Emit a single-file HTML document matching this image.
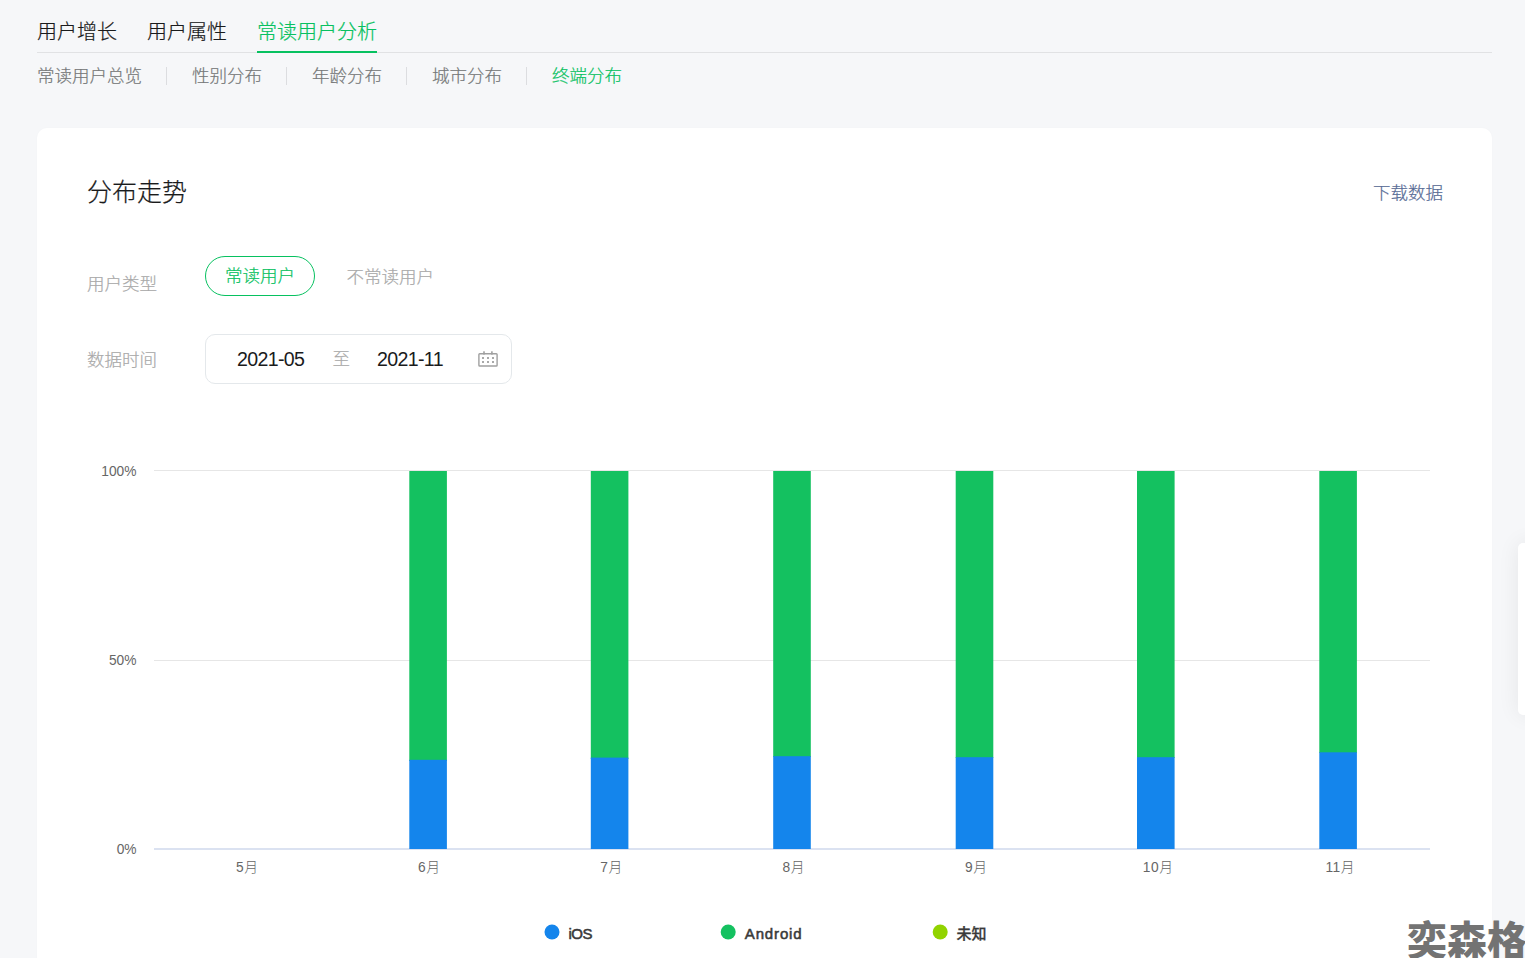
<!DOCTYPE html>
<html lang="zh-CN">
<head>
<meta charset="utf-8">
<title>常读用户分析 - 终端分布</title>
<style>
*{margin:0;padding:0;box-sizing:border-box}
html,body{width:1525px;height:958px;overflow:hidden;background:#f6f7f9}
body{position:relative;font-family:"Liberation Sans","Noto Sans CJK SC",sans-serif;color:#1a1b1c;font-weight:300;-webkit-text-stroke:0.22px}
.abs{position:absolute;white-space:nowrap}
.t1{font-size:20px;line-height:30px;top:17px;color:#1a1b1c}
.t1.on{color:#07c160}
.hr{position:absolute;left:37px;top:52px;width:1455px;height:1px;background:#e1e2e4}
.ul{position:absolute;left:257px;top:51px;width:120px;height:2px;background:#07c160}
.t2{font-size:17.5px;line-height:26px;top:63px;color:#757778}
.t2.on{color:#07c160}
.sep{position:absolute;top:67px;width:1px;height:18px;background:#dcdde0}
.card{position:absolute;left:37px;top:128px;width:1455px;height:900px;background:#fff;border-radius:10px;box-shadow:0 0 6px rgba(0,0,0,0.012)}
.title{font-size:25px;line-height:36px;left:87px;top:173.5px;color:#1a1b1c}
.dl{font-size:17.5px;line-height:26px;left:1373px;top:180px;color:#576b95}
.lab{font-size:17.5px;line-height:26px;left:87px;color:#a9a9a9}
.pill{position:absolute;left:205px;top:256px;width:110px;height:40px;border:1px solid #07c160;border-radius:20px;color:#07c160;font-size:17.5px;line-height:39px;text-align:center}
.opt{font-size:17.5px;line-height:26px;left:346.5px;top:263.5px;color:#a9a9a9}
.date{position:absolute;left:205px;top:334px;width:307px;height:50px;border:1px solid #e4e8eb;border-radius:10px;background:#fff}
.dt{font-size:19.6px;line-height:26px;top:345.5px;color:#1a1b1c;letter-spacing:-0.65px;font-weight:400;-webkit-text-stroke:0}
.to{font-size:17.5px;line-height:26px;left:332.5px;top:346px;color:#a9a9a9}
.float{position:absolute;left:1518px;top:543px;width:40px;height:172px;background:#fff;border-radius:5px;box-shadow:0 0 22px rgba(0,0,0,0.07)}
.wm{font-family:"Liberation Sans","Noto Sans CJK SC",sans-serif;font-weight:900;font-size:40px;line-height:40px;left:1407px;top:921px;color:#737373;letter-spacing:0;-webkit-text-stroke:0}
svg text{font-family:"Liberation Sans","Noto Sans CJK SC",sans-serif}
</style>
</head>
<body>
<div class="abs t1" style="left:37px">用户增长</div>
<div class="abs t1" style="left:147px">用户属性</div>
<div class="abs t1 on" style="left:257px">常读用户分析</div>
<div class="hr"></div><div class="ul"></div>

<div class="abs t2" style="left:37px">常读用户总览</div>
<div class="sep" style="left:166px"></div>
<div class="abs t2" style="left:192px">性别分布</div>
<div class="sep" style="left:286px"></div>
<div class="abs t2" style="left:312px">年龄分布</div>
<div class="sep" style="left:406px"></div>
<div class="abs t2" style="left:432px">城市分布</div>
<div class="sep" style="left:526px"></div>
<div class="abs t2 on" style="left:552px">终端分布</div>

<div class="card"></div>
<div class="abs title">分布走势</div>
<div class="abs dl">下载数据</div>

<div class="abs lab" style="top:271px">用户类型</div>
<div class="pill">常读用户</div>
<div class="abs opt">不常读用户</div>

<div class="abs lab" style="top:347px">数据时间</div>
<div class="date"></div>
<div class="abs dt" style="left:237px">2021-05</div>
<div class="abs to">至</div>
<div class="abs dt" style="left:377px">2021-11</div>
<svg class="abs" style="left:477px;top:350px" width="22" height="18" viewBox="0 0 22 18" fill="none">
  <rect x="1.9" y="3.7" width="18.2" height="12.3" rx="0.8" stroke="#a0a0a0" stroke-width="1.4"/>
  <rect x="6.2" y="1.3" width="1.6" height="3.3" fill="#a0a0a0"/><rect x="14.1" y="1.3" width="1.6" height="3.3" fill="#a0a0a0"/>
  <g fill="#a0a0a0">
    <rect x="5" y="7.1" width="2" height="1.8"/><rect x="10" y="7.1" width="2" height="1.8"/><rect x="15" y="7.1" width="2" height="1.8"/>
    <rect x="5" y="11.1" width="2" height="1.8"/><rect x="10" y="11.1" width="2" height="1.8"/><rect x="15" y="11.1" width="2" height="1.8"/>
  </g>
</svg>

<svg class="abs" style="left:0;top:440px" width="1525" height="518" viewBox="0 440 1525 518">
  <g shape-rendering="crispEdges">
    <rect x="154" y="470" width="1276" height="1" fill="#e6e6e6"/>
    <rect x="154" y="660" width="1276" height="1" fill="#e6e6e6"/>
  </g>
  <rect x="154" y="848.3" width="1276" height="1.4" fill="#ccd6eb"/>
  <g fill="#14c160">
    <rect x="409.3" y="471" width="37.6" height="290"/>
    <rect x="590.8" y="471" width="37.6" height="288"/>
    <rect x="773.2" y="471" width="37.6" height="286"/>
    <rect x="955.7" y="471" width="37.6" height="287"/>
    <rect x="1137" y="471" width="37.6" height="287"/>
    <rect x="1319.3" y="471" width="37.6" height="282"/>
  </g>
  <g fill="#1485ec">
    <rect x="409.3" y="759.8" width="37.6" height="89.2"/>
    <rect x="590.8" y="757.6" width="37.6" height="91.4"/>
    <rect x="773.2" y="756.2" width="37.6" height="92.8"/>
    <rect x="955.7" y="757.2" width="37.6" height="91.8"/>
    <rect x="1137" y="757.2" width="37.6" height="91.8"/>
    <rect x="1319.3" y="752.3" width="37.6" height="96.7"/>
  </g>
  <g font-size="13.75" fill="#666666" text-anchor="end">
    <text x="136.5" y="476">100%</text>
    <text x="136.5" y="665.3">50%</text>
    <text x="136.5" y="854">0%</text>
  </g>
  <g font-size="13.75" fill="#666666" text-anchor="middle" letter-spacing="0.6">
    <text x="247.2" y="872">5月</text>
    <text x="429.2" y="872">6月</text>
    <text x="611.6" y="872">7月</text>
    <text x="793.8" y="872">8月</text>
    <text x="976.2" y="872">9月</text>
    <text x="1158.3" y="872">10月</text>
    <text x="1340.3" y="872">11月</text>
  </g>
  <circle cx="552" cy="932" r="7.5" fill="#1485ec"/>
  <circle cx="728.2" cy="932" r="7.5" fill="#14c160"/>
  <circle cx="940.2" cy="932" r="7.5" fill="#91d300"/>
  <g font-size="15" fill="#3a3a3a" stroke="#3a3a3a" stroke-width="0.55" letter-spacing="0.45">
    <text x="568.5" y="939" letter-spacing="-0.5">iOS</text>
    <text x="744.8" y="939" letter-spacing="0.85">Android</text>
  </g>
  <g font-size="15" font-weight="500" fill="#3a3a3a" stroke="#3a3a3a" stroke-width="0.3">
    <text x="956.5" y="939">未知</text>
  </g>
</svg>

<div class="float"></div>
<div class="abs wm">奕森格</div>
</body>
</html>
